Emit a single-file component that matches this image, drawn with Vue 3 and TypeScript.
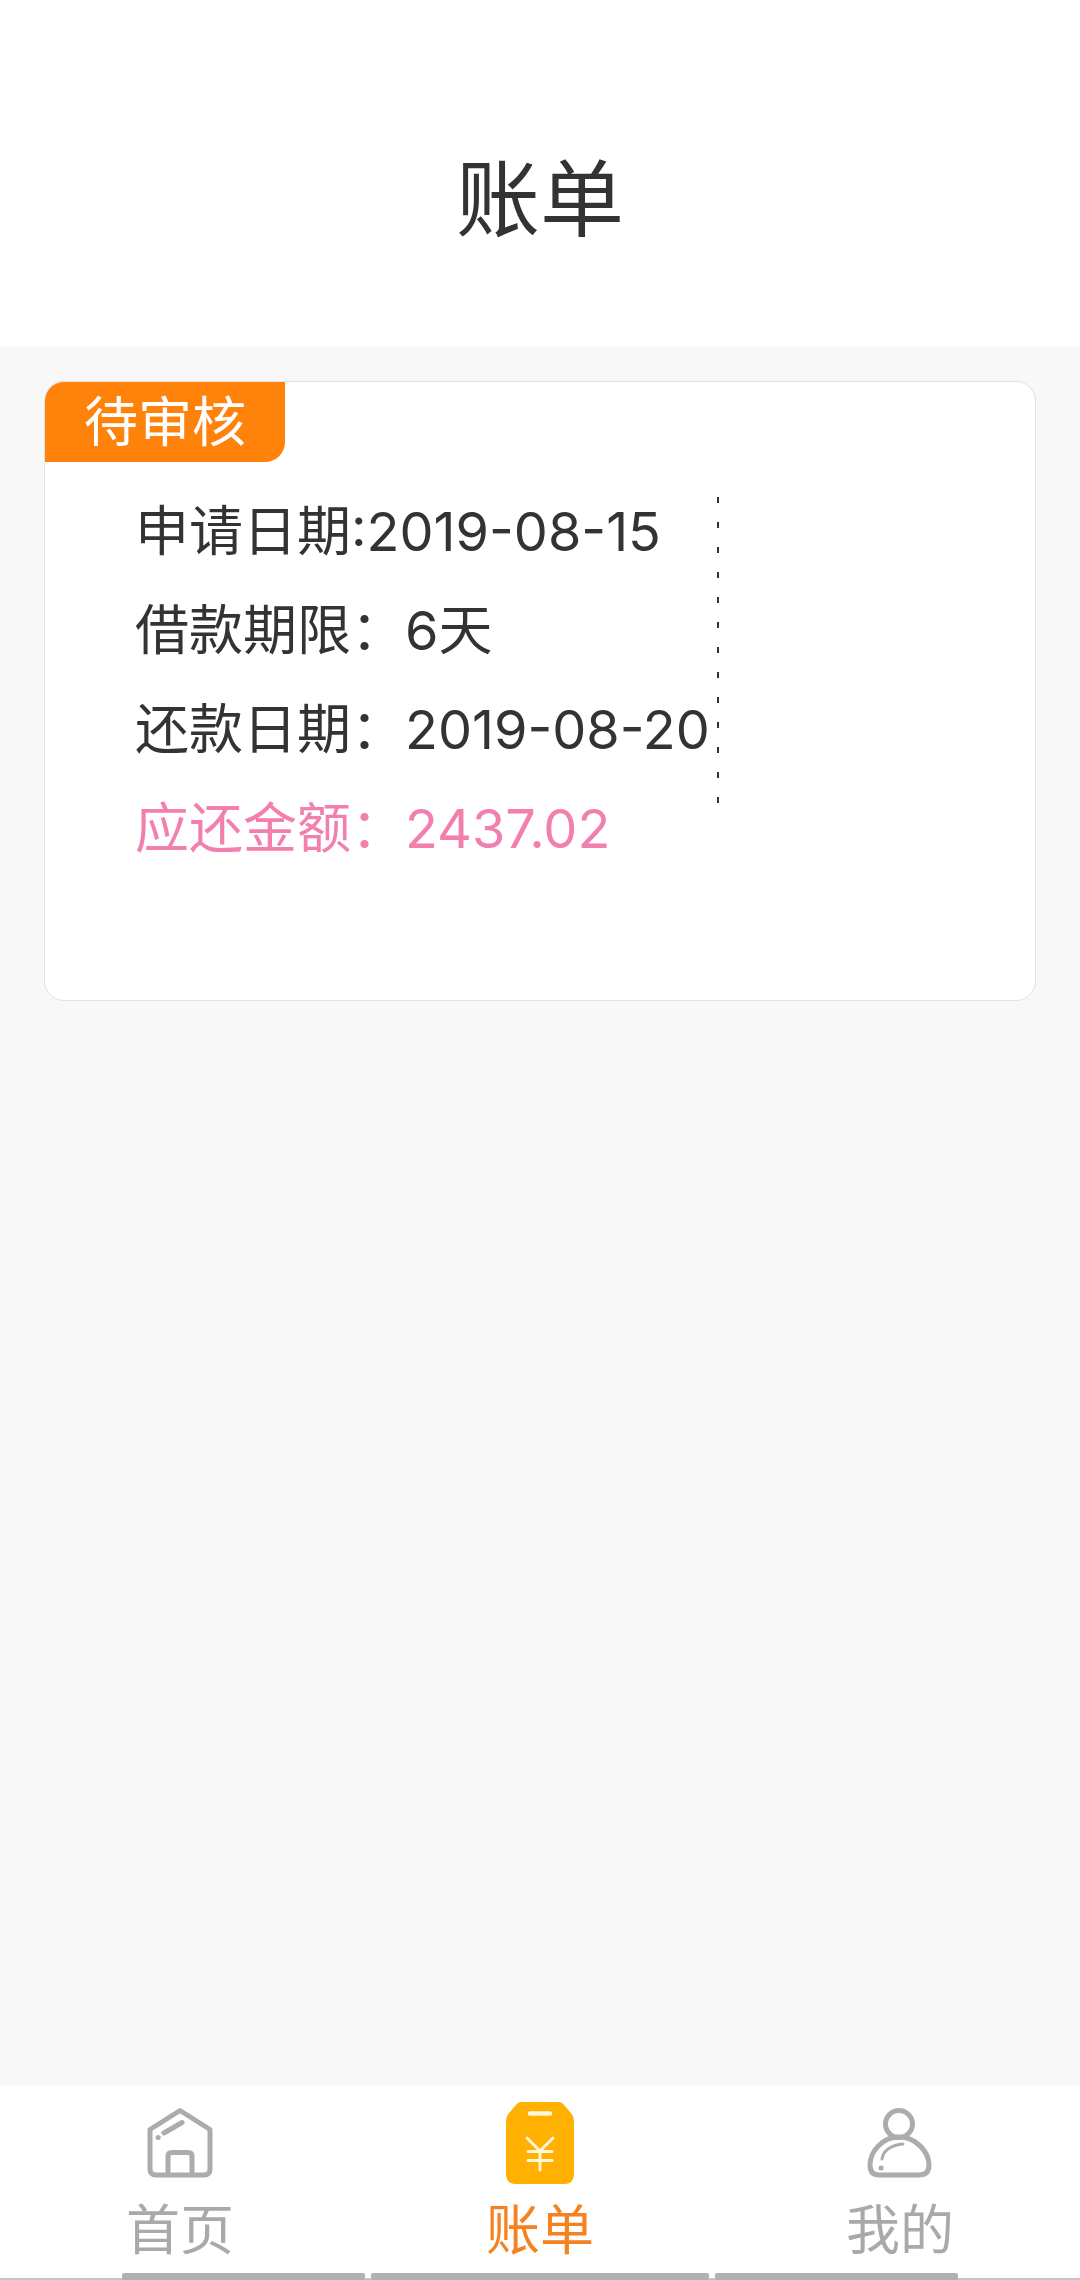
<script setup lang="ts">
interface Row { text: string; pink?: boolean; first?: boolean }
const rows: Row[] = [
  { text: '申请日期:2019-08-15', first: true },
  { text: '借款期限：6天' },
  { text: '还款日期：2019-08-20' },
  { text: '应还金额：2437.02', pink: true },
]
</script>

<template>
  <div class="page">
    <header class="head"><h1 class="title">账单</h1></header>
    <main class="main">
      <section class="card">
        <div class="tag">待审核</div>
        <div class="body">
          <div class="info">
            <div v-for="r in rows" :key="r.text" class="row" :class="{ pink: r.pink, first: r.first }">{{ r.text }}</div>
          </div>
          <div class="divider"></div>
        </div>
      </section>
    </main>
    <nav class="tabs">
      <div class="tab">
        <svg class="ico" width="66" height="70" viewBox="0 0 66 70" fill="none" stroke="#acacac" stroke-width="5" stroke-linejoin="round" stroke-linecap="round">
          <path d="M33 2.5 L63 21.5 V61 Q63 67 57 67 H9 Q3 67 3 61 V21.5 Z" />
          <path d="M21 67 V48 Q21 44.5 25 44.5 H41 Q45 44.5 45 48 V67" />
          <path d="M17 25 L35 14.5" />
          <path d="M11 29.5 L11.2 29.5" />
        </svg>
        <span class="lbl">首页</span>
      </div>
      <div class="tab on">
        <svg class="ico bill" width="68" height="82" viewBox="0 0 68 82">
          <path fill="#ffb000" d="M16 0 H52 Q56 0 58 3 L64 10 Q68 14 68 20 V72 Q68 82 58 82 H10 Q0 82 0 72 V20 Q0 14 4 10 L10 3 Q12 0 16 0 Z" />
          <g fill="none" stroke="#fff6dc" stroke-width="3" stroke-linecap="round">
            <path d="M24 11.5 H44" stroke-width="4.5" />
            <path d="M21 36 L34 49 L47 36" />
            <path d="M22 49.5 H46" />
            <path d="M22 58.5 H46" />
            <path d="M34 49 V68" />
          </g>
        </svg>
        <span class="lbl">账单</span>
      </div>
      <div class="tab">
        <svg class="ico" width="66" height="70" viewBox="0 0 66 70" fill="none" stroke="#acacac" stroke-width="5" stroke-linecap="round">
          <circle cx="32" cy="16" r="13.5" />
          <path d="M32 29 C49 29 62 44 62 57 Q62 67 52 67 H12 Q3 67 3 57 C3 44 15 29 32 29 Z" />
          <path d="M36 36 C25 37 16 42 15 51" stroke-width="3" />
          <path d="M14 60 L14.2 60" />
        </svg>
        <span class="lbl">我的</span>
      </div>
    </nav>
    <div class="indicator">
      <i class="seg"></i><i class="seg wide"></i><i class="seg"></i>
    </div>
  </div>
</template>

<style scoped>
.page {
  width: 1080px;
  height: 2280px;
  display: flex;
  flex-direction: column;
  background: #fff;
  font-family: Inter, "Noto Sans CJK SC", sans-serif;
  font-weight: 400;
  color: #333;
}
.head {
  height: 346px;
  flex: none;
  display: flex;
  align-items: center;
  justify-content: center;
  padding-top: 54px;
  box-sizing: border-box;
}
.title {
  margin: 0;
  font-size: 84px;
  font-weight: 400;
  line-height: 100px;
}
.main {
  flex: 1;
  min-height: 0;
  background: #f8f8f8;
  padding: 35px 44px 0;
}
.card {
  height: 620px;
  box-sizing: border-box;
  background: #fff;
  border: 1px solid #e2e2e2;
  border-radius: 20px;
  overflow: hidden;
}
.tag {
  width: 240px;
  height: 80px;
  background: #ff820a;
  color: #fff;
  font-size: 54px;
  line-height: 82px;
  text-align: center;
  border-bottom-right-radius: 20px;
}
.body {
  display: flex;
  align-items: flex-start;
  padding-left: 90px;
}
.info {
  width: 582px;
  padding-top: 20px;
  flex: none;
}
.row {
  height: 99px;
  line-height: 99px;
  font-size: 54px;
  white-space: nowrap;
}
.row.pink {
  color: #f27fae;
}
.divider {
  width: 2px;
  height: 308px;
  margin-top: 35px;
  background: repeating-linear-gradient(to bottom, #333 0 6px, transparent 6px 25px);
}
.tabs {
  flex: none;
  height: 188px;
  display: grid;
  grid-template-columns: repeat(3, 360px);
}
.tab {
  position: relative;
  display: flex;
  flex-direction: column;
  align-items: center;
  padding-top: 23px;
  color: #a9a9a9;
}
.ico {
  display: block;
  height: 70px;
}
.ico.bill {
  height: 82px;
  margin-top: -6px;
  margin-bottom: -6px;
}
.lbl {
  font-size: 54px;
  line-height: 60px;
  margin-top: 23px;
}
.tab.on {
  color: #f5821f;
}
.indicator {
  flex: none;
  height: 7px;
  display: flex;
  justify-content: center;
  gap: 6px;
  background: linear-gradient(to bottom, #fff 0 5px, #c4c4c4 5px);
}
.seg {
  width: 243px;
  height: 7px;
  background: #b0b0b0;
  border-radius: 2px;
}
.seg.wide {
  width: 338px;
}
</style>
